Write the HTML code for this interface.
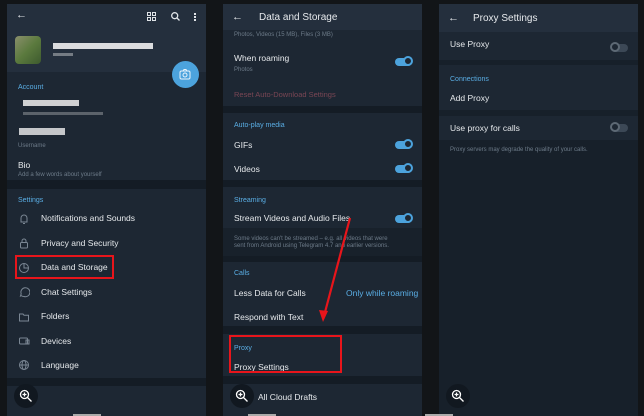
<!DOCTYPE html><html><head><meta charset="utf-8"><style>
*{margin:0;padding:0;box-sizing:border-box}
body{width:644px;height:416px;background:#121518;position:relative;overflow:hidden;font-family:"Liberation Sans",sans-serif;}
.p{position:absolute;top:4px;height:412px;background:#1d2733;overflow:hidden}
.a{position:absolute;white-space:nowrap}
.t{font-size:8.5px;color:#e6e9ec}
.s{font-size:6px;color:#6d7b89}
.h{font-size:7px;color:#5aaee5}
.gap{position:absolute;left:0;right:0;background:#141c25}
.tg{position:absolute;width:17px;height:8px;border-radius:4px;background:#4ca3dd}
.tg:after{content:"";position:absolute;right:-1px;top:-2px;width:10px;height:10px;border-radius:50%;background:#1d2733;border:2px solid #4ca3dd;box-sizing:border-box}
.tf{position:absolute;width:17px;height:8px;border-radius:4px;background:#3c4856}
.tf:after{content:"";position:absolute;left:-1px;top:-2px;width:10px;height:10px;border-radius:50%;background:#1d2733;border:2px solid #5d6975;box-sizing:border-box}
.ic{position:absolute;left:11px;width:12px;height:12px}
.zm{position:absolute;width:24px;height:24px;border-radius:50%;background:#111820}
.red{position:absolute;border:2px solid #e8151b}
.w{position:absolute;background:#f0f0f0}
</style></head><body>

<!-- Panel 1 -->
<div class="p" style="left:7px;width:199px">
 <div style="position:absolute;left:0;top:0;width:199px;height:68px;background:#242f3d"></div>
 <div class="a t" style="left:9px;top:5px;font-size:11px">←</div>
 <svg class="a" style="left:140px;top:8px" width="9" height="9" viewBox="0 0 9 9" fill="none" stroke="#dfe3e7" stroke-width="1"><rect x=".5" y=".5" width="3" height="3"/><rect x="5.5" y=".5" width="3" height="3"/><rect x=".5" y="5.5" width="3" height="3"/><rect x="5.5" y="5.5" width="3" height="3"/></svg>
 <svg class="a" style="left:164px;top:8px" width="9" height="9" viewBox="0 0 9 9" fill="none" stroke="#dfe3e7" stroke-width="1.3"><circle cx="3.7" cy="3.7" r="3"/><path d="M6 6l2.5 2.5"/></svg>
 <div class="a" style="left:187px;top:9px;width:2px;height:2px;background:#dfe3e7;box-shadow:0 3px #dfe3e7,0 6px #dfe3e7"></div>
 <div class="a" style="left:8px;top:32px;width:26px;height:28px;background:linear-gradient(135deg,#8a8f6c,#5b7a3e 50%,#3d5a2e);border-radius:4px"></div>
 <div class="w" style="left:46px;top:39px;width:100px;height:6px;opacity:.9"></div>
 <div class="w" style="left:46px;top:49px;width:20px;height:3px;opacity:.4"></div>
 <div class="a" style="left:165px;top:57px;width:27px;height:27px;border-radius:50%;background:#4ca3dd"></div>
 <svg class="a" style="left:172px;top:64px" width="13" height="13" viewBox="0 0 13 13" fill="none" stroke="#e8f3fb" stroke-width="1"><rect x="1" y="3" width="10" height="8" rx="1.5"/><circle cx="6" cy="7" r="2"/><path d="M4 3l1-1.5h2L8 3"/></svg>
 <div class="a h" style="left:11px;top:80px">Account</div>
 <div class="w" style="left:16px;top:96px;width:56px;height:6px;opacity:.85"></div>
 <div class="w" style="left:16px;top:108px;width:80px;height:3px;opacity:.3"></div>
 <div class="w" style="left:12px;top:124px;width:46px;height:7px;opacity:.8"></div>
 <div class="a s" style="left:11px;top:139px">Username</div>
 <div class="a t" style="left:11px;top:156px">Bio</div>
 <div class="a s" style="left:11px;top:168px">Add a few words about yourself</div>
 <div class="gap" style="top:176px;height:9px"></div>
 <div class="a h" style="left:11px;top:193px">Settings</div>
 <svg class="ic" style="top:209px" viewBox="0 0 12 12" fill="none" stroke="#7b8794" stroke-width="1"><path d="M3 9V5a3 3 0 016 0v4H2.5h7M5 10.5h2"/></svg>
 <div class="a t" style="left:34px;top:209px">Notifications and Sounds</div>
 <svg class="ic" style="top:233px" viewBox="0 0 12 12" fill="none" stroke="#7b8794" stroke-width="1"><rect x="2.5" y="5.5" width="7" height="5.5" rx="1"/><path d="M4 5.5V4a2 2 0 014 0v1.5"/></svg>
 <div class="a t" style="left:34px;top:234px">Privacy and Security</div>
 <svg class="ic" style="top:258px" viewBox="0 0 12 12" fill="none" stroke="#7b8794" stroke-width="1"><circle cx="6" cy="6" r="4.5"/><path d="M6 1.5V6h4.5"/></svg>
 <div class="a t" style="left:34px;top:258px">Data and Storage</div>
 <svg class="ic" style="top:282px" viewBox="0 0 12 12" fill="none" stroke="#7b8794" stroke-width="1"><path d="M2.5 10l.7-2.2A4.5 4.5 0 116 10.5c-1 0-2-.3-2.8-.9z"/></svg>
 <div class="a t" style="left:34px;top:283px">Chat Settings</div>
 <svg class="ic" style="top:307px" viewBox="0 0 12 12" fill="none" stroke="#7b8794" stroke-width="1"><path d="M1.5 3h3.5l1 1.2h4.5v5.8h-9z"/></svg>
 <div class="a t" style="left:34px;top:307px">Folders</div>
 <svg class="ic" style="top:331px" viewBox="0 0 12 12" fill="none" stroke="#7b8794" stroke-width="1"><rect x="1.5" y="3" width="8" height="6" rx="1"/><rect x="8" y="5" width="3" height="4"/></svg>
 <div class="a t" style="left:34px;top:332px">Devices</div>
 <svg class="ic" style="top:355px" viewBox="0 0 12 12" fill="none" stroke="#7b8794" stroke-width="1"><circle cx="6" cy="6" r="4.5"/><ellipse cx="6" cy="6" rx="2" ry="4.5"/><path d="M1.5 6h9"/></svg>
 <div class="a t" style="left:34px;top:356px">Language</div>
 <div class="gap" style="top:374px;height:8px"></div>
 <div class="zm" style="left:7px;top:380px"></div>
</div>

<!-- Panel 2 -->
<div class="p" style="left:223px;width:199px">
 <div style="position:absolute;left:0;top:0;width:199px;height:26px;background:#242f3d"></div>
 <div class="a t" style="left:9px;top:7px;font-size:11px">←</div>
 <div class="a t" style="left:36px;top:8px;font-size:10px">Data and Storage</div>
 <div class="a s" style="left:11px;top:28px">Photos, Videos (15 MB), Files (3 MB)</div>
 <div class="a t" style="left:11px;top:49px">When roaming</div>
 <div class="a s" style="left:11px;top:63px">Photos</div>
 <div class="tg" style="left:172px;top:54px"></div>
 <div class="a" style="left:11px;top:86px;font-size:7.5px;color:#7a4654">Reset Auto-Download Settings</div>
 <div class="gap" style="top:102px;height:7px"></div>
 <div class="a h" style="left:11px;top:118px">Auto-play media</div>
 <div class="a t" style="left:11px;top:136px">GIFs</div>
 <div class="tg" style="left:172px;top:137px"></div>
 <div class="a t" style="left:11px;top:160px">Videos</div>
 <div class="tg" style="left:172px;top:161px"></div>
 <div class="gap" style="top:176px;height:7px"></div>
 <div class="a h" style="left:11px;top:193px">Streaming</div>
 <div class="a t" style="left:11px;top:209px">Stream Videos and Audio Files</div>
 <div class="tg" style="left:172px;top:211px"></div>
 <div class="a" style="left:0;top:224px;width:199px;height:28px;background:#18212b"></div>
 <div class="a s" style="left:11px;top:232px;line-height:7px">Some videos can't be streamed – e.g. all videos that were<br>sent from Android using Telegram 4.7 and earlier versions.</div>
 <div class="gap" style="top:252px;height:6px"></div>
 <div class="a h" style="left:11px;top:266px">Calls</div>
 <div class="a t" style="left:11px;top:284px">Less Data for Calls</div>
 <div class="a" style="left:123px;top:284px;font-size:8.5px;color:#5aaee5">Only while roaming</div>
 <div class="a t" style="left:11px;top:308px">Respond with Text</div>
 <div class="gap" style="top:322px;height:8px"></div>
 <div class="a h" style="left:11px;top:341px">Proxy</div>
 <div class="a t" style="left:11px;top:358px">Proxy Settings</div>
 <div class="gap" style="top:372px;height:8px"></div>
 <div class="a t" style="left:35px;top:388px">All Cloud Drafts</div>
 <div class="zm" style="left:7px;top:380px"></div>
</div>
<div class="red" style="left:15px;top:255px;width:99px;height:24px"></div>
<div class="red" style="left:229px;top:335px;width:113px;height:38px"></div>
<svg class="a" style="left:0;top:0" width="644" height="416"><path d="M350 218L324 316" stroke="#e8151b" stroke-width="2.2"/><path d="M319 310l4 12 5-11z" fill="#e8151b"/></svg>

<!-- Panel 3 -->
<div class="p" style="left:439px;width:199px;background:#17202a">
 <div style="position:absolute;left:0;top:0;width:199px;height:28px;background:#242f3d"></div>
 <div class="a t" style="left:9px;top:8px;font-size:11px">←</div>
 <div class="a t" style="left:34px;top:9px;font-size:10px">Proxy Settings</div>
 <div class="a" style="left:0;top:28px;width:199px;height:28px;background:#1d2733"></div>
 <div class="a t" style="left:11px;top:35px">Use Proxy</div>
 <div class="tf" style="left:172px;top:40px"></div>
 <div class="a" style="left:0;top:61px;width:199px;height:45px;background:#1d2733"></div>
 <div class="a h" style="left:11px;top:72px">Connections</div>
 <div class="a t" style="left:11px;top:89px">Add Proxy</div>
 <div class="a" style="left:0;top:112px;width:199px;height:24px;background:#1d2733"></div>
 <div class="a t" style="left:11px;top:119px">Use proxy for calls</div>
 <div class="tf" style="left:172px;top:120px"></div>
 <div class="a s" style="left:11px;top:143px">Proxy servers may degrade the quality of your calls.</div>
 <div class="zm" style="left:7px;top:380px"></div>
</div>

<svg class="a" style="left:0;top:0" width="644" height="416" fill="none" stroke="#fff" stroke-width="1.3">
 <g transform="translate(20,390)"><circle cx="4.5" cy="4.5" r="4"/><path d="M7.5 7.5l4 4M2.5 4.5h4M4.5 2.5v4"/></g>
 <g transform="translate(236,390)"><circle cx="4.5" cy="4.5" r="4"/><path d="M7.5 7.5l4 4M2.5 4.5h4M4.5 2.5v4"/></g>
 <g transform="translate(452,390)"><circle cx="4.5" cy="4.5" r="4"/><path d="M7.5 7.5l4 4M2.5 4.5h4M4.5 2.5v4"/></g>
</svg>
<div class="a" style="left:73px;top:414px;width:28px;height:2px;background:#aaa"></div>
<div class="a" style="left:248px;top:414px;width:28px;height:2px;background:#aaa"></div>
<div class="a" style="left:425px;top:414px;width:28px;height:2px;background:#aaa"></div>
</body></html>
